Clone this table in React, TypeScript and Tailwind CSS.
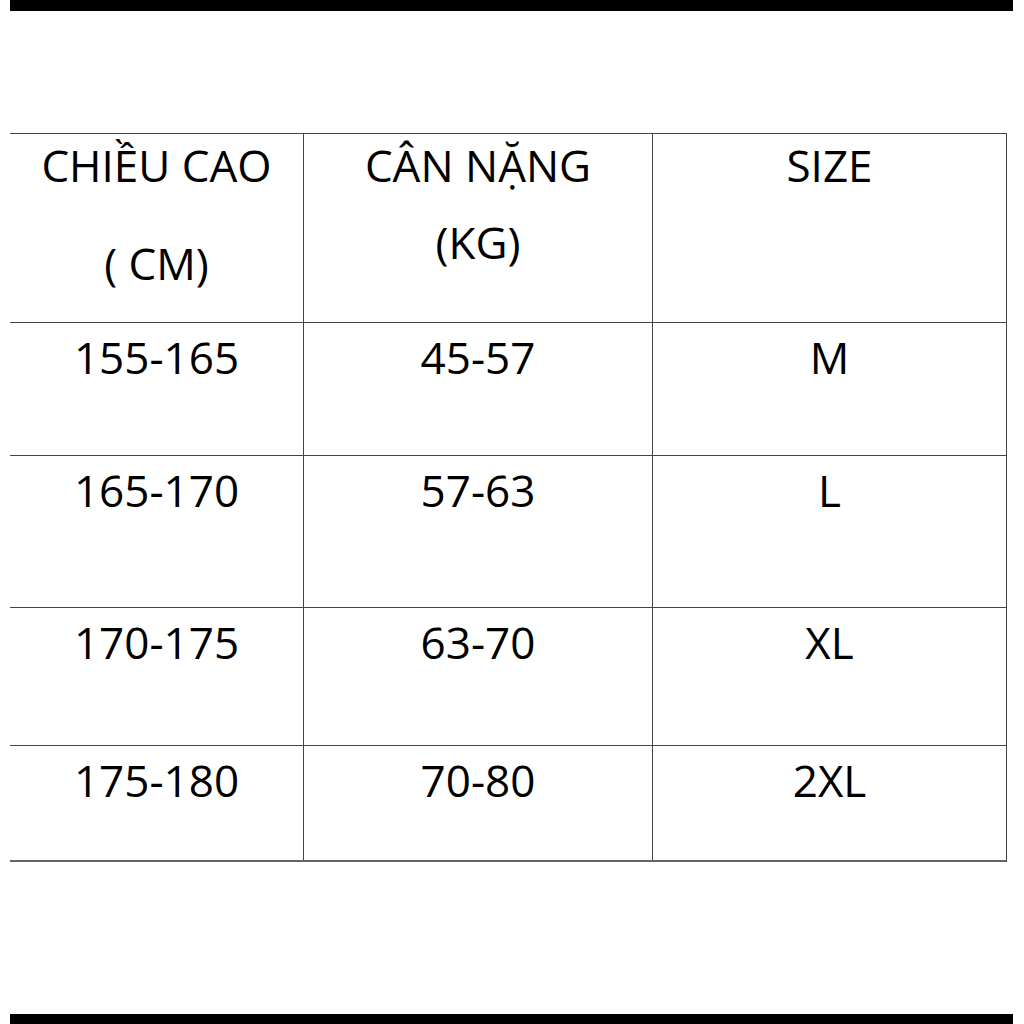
const rows = [
  { h: "h-[133px]", height: "155-165", weight: "45-57", size: "M" },
  { h: "h-[152px]", height: "165-170", weight: "57-63", size: "L" },
  { h: "h-[138px]", height: "170-175", weight: "63-70", size: "XL" },
  { h: "h-[116px]", height: "175-180", weight: "70-80", size: "2XL" },
];

export default function App() {
  return (
    <div
      className="w-[1024px] h-[1024px] bg-white flex flex-col text-black overflow-hidden"
      style={{ fontFamily: '"Open Sans", "Noto Sans", sans-serif' }}
    >
      {/* Top bar */}
      <div className="h-[11px] ml-[10px] w-[1003px] bg-black shrink-0" />

      {/* Size table */}
      <div className="mt-[122px] ml-[10px] w-[997px] border-t border-r border-[#444] text-[44px] leading-[60px]">
        {/* Header */}
        <div className="grid grid-cols-[293px_349px_354px] h-[189px] border-b border-[#444]">
          <div className="flex flex-col items-center pt-[1px]">
            <span>CHIỀU CAO</span>
            <span className="mt-[38px]">( CM)</span>
          </div>
          <div className="flex flex-col items-center pt-[1px] border-l border-[#444]">
            <span>CÂN NẶNG</span>
            <span className="mt-[17px]">(KG)</span>
          </div>
          <div className="flex flex-col items-center pt-[1px] border-l border-[#444]">
            <span>SIZE</span>
          </div>
        </div>

        {rows.map((r, i) => (
          <div
            key={r.height}
            className={`grid grid-cols-[293px_349px_354px] ${r.h} ${
              i === rows.length - 1 ? "border-b-2 border-b-[#666]" : "border-b border-[#444]"
            }`}
          >
            <div className="flex justify-center pt-[4px]">{r.height}</div>
            <div className="flex justify-center pt-[4px] border-l border-[#444]">{r.weight}</div>
            <div className="flex justify-center pt-[4px] border-l border-[#444]">{r.size}</div>
          </div>
        ))}
      </div>

      <div className="flex-1" />
      {/* Bottom bar */}
      <div className="h-[10px] ml-[10px] w-[1003px] bg-black shrink-0" />
    </div>
  );
}
